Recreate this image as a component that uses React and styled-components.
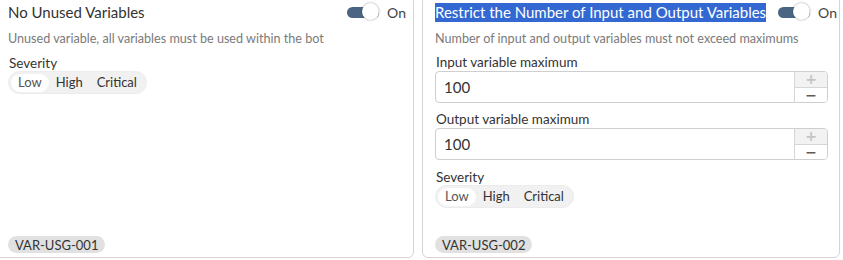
import React, { useState } from "react";
import styled, { createGlobalStyle } from "styled-components";

const Global = createGlobalStyle`
  html, body {
    margin: 0;
    background: #ffffff;
    overflow: hidden;
  }
  body {
    font-family: Lato, "Open Sans", sans-serif;
    color: #333333;
  }
`;

const Grid = styled.div`
  display: grid;
  grid-template-columns: 419px 418px;
  column-gap: 8px;
  margin: -4px 0 0 -5px;
`;

const Card = styled.section`
  box-sizing: border-box;
  height: 262px;
  border: 1px solid #d4d4d4;
  border-radius: 6px;
  padding: 5px 7px 4px 12px;
  display: flex;
  flex-direction: column;
`;

const Header = styled.div`
  display: flex;
  align-items: center;
  justify-content: space-between;
  gap: 12px;
  height: 20px;
`;

const Title = styled.h3`
  margin: 0;
  font-size: 15px;
  font-weight: 400;
  line-height: 19px;
  white-space: nowrap;
  span {
    display: inline-block;
    background: ${(p) => (p.$selected ? "#3367d1" : "transparent")};
    color: ${(p) => (p.$selected ? "#ffffff" : "#333333")};
  }
`;

const ToggleWrap = styled.label`
  display: flex;
  align-items: center;
  gap: 8px;
  font-size: 14px;
  color: #444;
  cursor: pointer;
`;

const Track = styled.span`
  position: relative;
  width: 32px;
  height: 11px;
  border-radius: 6px;
  background: ${(p) => (p.$on ? "#4a6584" : "#bbbbbb")};
  span {
    position: absolute;
    top: -4px;
    left: ${(p) => (p.$on ? "15px" : "-2px")};
    width: 17px;
    height: 17px;
    border-radius: 50%;
    background: #ffffff;
    box-shadow: 0 0 2px rgba(0, 0, 0, 0.45);
  }
`;

const Desc = styled.p`
  margin: 8px 0 0;
  font-size: 12.6px;
  line-height: 18px;
  color: #7a7a7a;
`;

const Label = styled.div`
  margin-top: ${(p) => p.$gap || 6}px;
  padding-left: 1px;
  font-size: 13.5px;
  line-height: 17px;
  color: #333;
`;

const Segments = styled.div`
  align-self: flex-start;
  display: flex;
  align-items: center;
  margin-top: -1px;
  padding: 2px 2px;
  height: 23px;
  box-sizing: border-box;
  border-radius: 12px;
  background: #f1f1f1;
  border: 1px solid #ececec;
`;

const Segment = styled.button`
  font: inherit;
  font-size: 13px;
  line-height: 17px;
  border: none;
  padding: 0 7px;
  height: 18px;
  border-radius: 9px;
  cursor: pointer;
  background: ${(p) => (p.$active ? "#ffffff" : "transparent")};
  color: ${(p) => (p.$active ? "#555" : "#333")};
`;

const NumberBox = styled.div`
  display: flex;
  height: 32px;
  box-sizing: border-box;
  margin-right: 4px;
  border: 1px solid #cfcfcf;
  border-radius: 4px;
  overflow: hidden;
`;

const NumberValue = styled.div`
  flex: 1;
  padding-left: 8px;
  font-size: 15px;
  line-height: 30px;
  color: #333;
`;

const Spinner = styled.div`
  width: 32px;
  display: flex;
  flex-direction: column;
  border-left: 1px solid #d6d6d6;
`;

const Step = styled.button`
  height: 15px;
  border: none;
  padding: 0;
  font-family: "DejaVu Sans", sans-serif;
  font-size: 14px;
  font-weight: 700;
  line-height: 15px;
  overflow: hidden;
  display: flex;
  align-items: center;
  justify-content: center;
  background: ${(p) => (p.$disabled ? "#f2f2f2" : "#ffffff")};
  color: ${(p) => (p.$disabled ? "#c4c4c4" : "#5a5a5a")};
  & + & {
    border-top: 1px solid #d6d6d6;
  }
`;

const Footer = styled.div`
  margin-top: auto;
`;

const Tag = styled.span`
  display: inline-block;
  padding: 0 7px;
  height: 17px;
  line-height: 18px;
  font-size: 13px;
  color: #333;
  border-radius: 9px;
  background: #e1e1e1;
`;

const levels = ["Low", "High", "Critical"];

function Toggle() {
  const [on, setOn] = useState(true);
  return (
    <ToggleWrap onClick={() => setOn(!on)}>
      <Track $on={on}>
        <span />
      </Track>
      {on ? "On" : "Off"}
    </ToggleWrap>
  );
}

function Severity({ gap }) {
  const [level, setLevel] = useState(0);
  return (
    <>
      <Label $gap={gap}>Severity</Label>
      <Segments>
        {levels.map((l, i) => (
          <Segment key={l} $active={i === level} onClick={() => setLevel(i)}>
            {l}
          </Segment>
        ))}
      </Segments>
    </>
  );
}

function NumberField({ label, value, gap }) {
  return (
    <>
      <Label $gap={gap}>{label}</Label>
      <NumberBox>
        <NumberValue>{value}</NumberValue>
        <Spinner>
          <Step $disabled>+</Step>
          <Step>−</Step>
        </Spinner>
      </NumberBox>
    </>
  );
}

export default function App() {
  return (
    <>
      <Global />
      <Grid>
        <Card>
          <Header>
            <Title>
              <span>No Unused Variables</span>
            </Title>
            <Toggle />
          </Header>
          <Desc>Unused variable, all variables must be used within the bot</Desc>
          <Severity gap={7} />
          <Footer>
            <Tag>VAR-USG-001</Tag>
          </Footer>
        </Card>
        <Card>
          <Header>
            <Title $selected>
              <span>Restrict the Number of Input and Output Variables</span>
            </Title>
            <Toggle />
          </Header>
          <Desc>Number of input and output variables must not exceed maximums</Desc>
          <NumberField label="Input variable maximum" value="100" gap={6} />
          <NumberField label="Output variable maximum" value="100" gap={8} />
          <Severity gap={9} />
          <Footer>
            <Tag>VAR-USG-002</Tag>
          </Footer>
        </Card>
      </Grid>
    </>
  );
}
